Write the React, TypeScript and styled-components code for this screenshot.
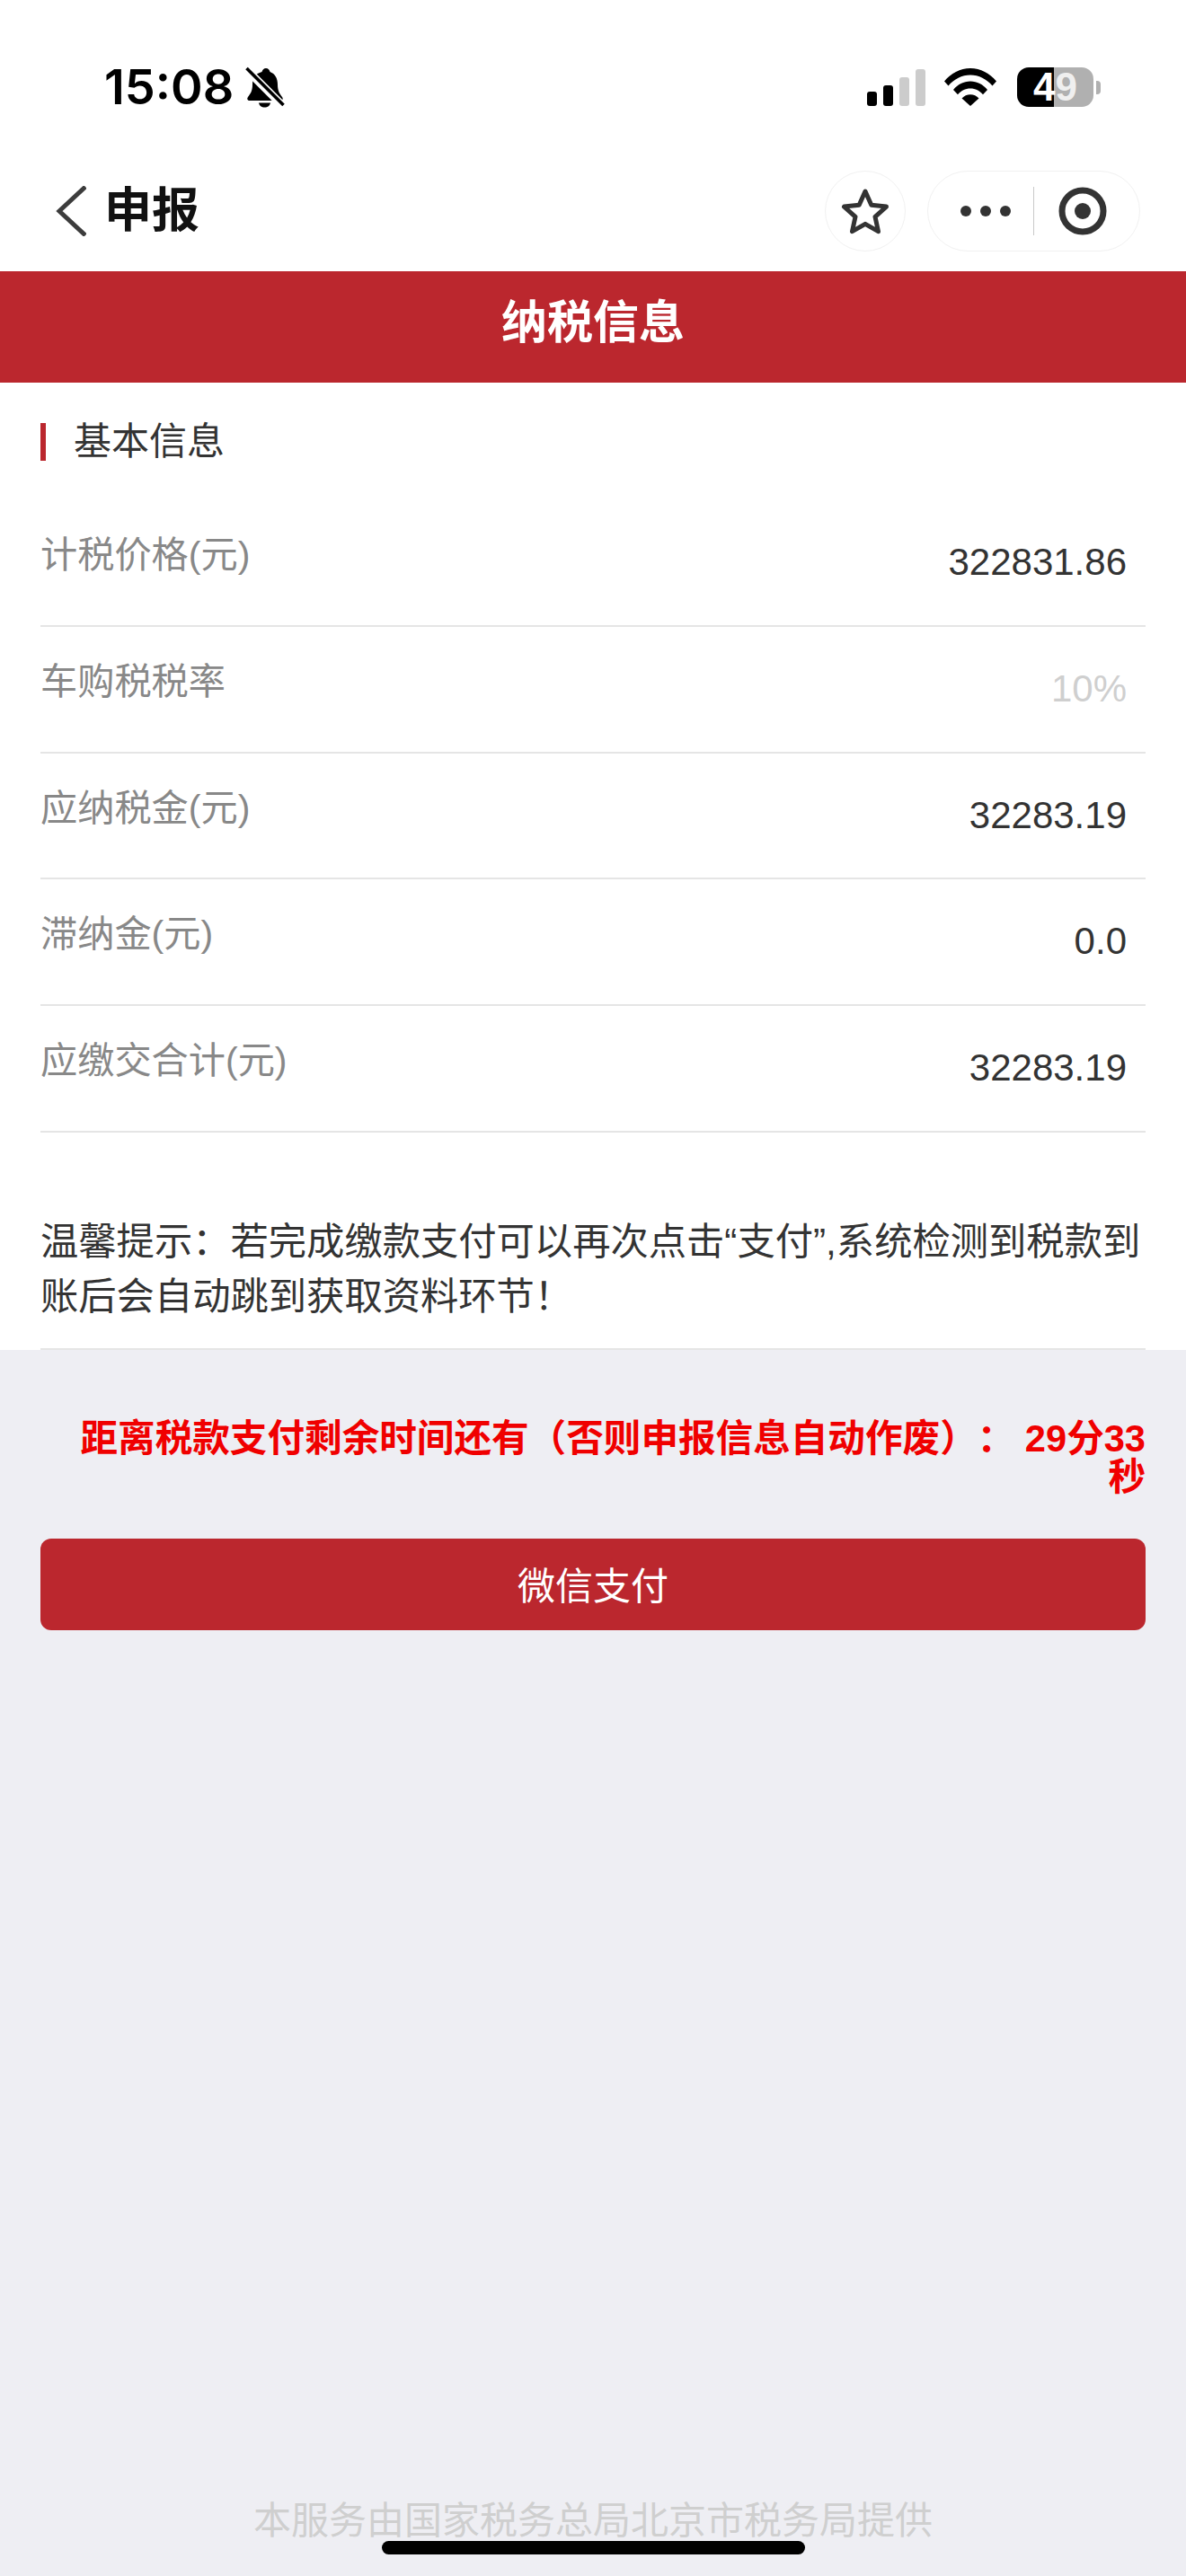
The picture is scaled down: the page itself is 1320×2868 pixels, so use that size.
import React from "react";
import styled, { createGlobalStyle } from "styled-components";

const SANS = `"Liberation Sans", "Noto Sans CJK SC", sans-serif`;
const RED = "#bb272e";

const Global = createGlobalStyle`
  html, body { margin: 0; padding: 0; background: #eeeef3; }
  * { box-sizing: border-box; text-spacing-trim: space-all; }
`;

const Page = styled.div`
  position: relative;
  width: 1320px;
  height: 2868px;
  overflow: hidden;
  display: flex;
  flex-direction: column;
  background: #eeeef3;
  font-family: ${SANS};
`;

const StatusBar = styled.div`
  height: 190px;
  flex: none;
  background: #fff;
  display: flex;
  align-items: flex-start;
  justify-content: space-between;
  padding: 74px 95px 0 116px;
`;

const StatusLeft = styled.div`
  display: flex;
  align-items: center;
  gap: 13px;
  height: 46px;
`;

const Clock = styled.span`
  font-family: Inter, sans-serif;
  font-size: 54px;
  font-weight: 600;
  line-height: 46px;
  color: #000;
`;

const StatusRight = styled.div`
  display: flex;
  align-items: center;
  height: 46px;
`;

const Signal = styled.div`
  display: flex;
  align-items: flex-end;
  gap: 7px;
  height: 41px;
  margin-right: 21px;
`;

const SignalBar = styled.i<{ $h: number; $on?: boolean }>`
  display: block;
  width: 11px;
  height: ${(p) => p.$h}px;
  border-radius: 3px;
  background: ${(p) => (p.$on ? "#000" : "#cccccc")};
`;

const Battery = styled.div`
  position: relative;
  width: 85px;
  height: 44px;
  margin-left: 23px;
  border-radius: 13px;
  background: linear-gradient(to right, #000 0 41px, #b0b0b0 41px 100%);
  display: flex;
  align-items: center;
  justify-content: center;
`;

const BatteryDigits = styled.span`
  font-family: "Liberation Sans", sans-serif;
  font-weight: 700;
  font-size: 44px;
  line-height: 44px;
  color: #fff;
`;

const BatteryNine = styled.span`
  color: #efefef;
`;

const BatteryTip = styled.i`
  display: block;
  width: 5px;
  height: 15px;
  margin-left: 3px;
  border-radius: 0 4px 4px 0;
  background: #b0b0b0;
`;

const NavBar = styled.div`
  height: 112px;
  flex: none;
  background: #fff;
  display: flex;
  align-items: flex-start;
  padding: 0 51px 0 62px;
`;

const NavBack = styled.div`
  display: flex;
  align-items: center;
  height: 90px;
  gap: 20px;
`;

const NavTitle = styled.span`
  font-size: 53px;
  font-weight: 700;
  line-height: 90px;
  color: #111;
`;

const NavActions = styled.div`
  margin-left: auto;
  display: flex;
  gap: 24px;
`;

const RoundButton = styled.div`
  width: 90px;
  height: 90px;
  border-radius: 50%;
  border: 1px solid #f1f1f1;
  display: flex;
  align-items: center;
  justify-content: center;
`;

const Capsule = styled.div`
  width: 237px;
  height: 90px;
  border-radius: 45px;
  border: 1px solid #f1f1f1;
  display: flex;
  align-items: center;
`;

const Dots = styled.div`
  width: 117px;
  padding-left: 36px;
  display: flex;
  gap: 10px;
`;

const Dot = styled.i`
  display: block;
  width: 12px;
  height: 12px;
  border-radius: 50%;
  background: #333;
`;

const CapsuleDivider = styled.i`
  display: block;
  width: 1px;
  height: 54px;
  background: #c9c9c9;
`;

const RecordWrap = styled.div`
  flex: 1;
  display: flex;
  justify-content: center;
  padding-right: 10px;
`;

const Banner = styled.header`
  height: 124px;
  flex: none;
  background: ${RED};
  color: #fff;
  font-size: 51px;
  font-weight: 700;
  line-height: 116px;
  text-align: center;
`;

const Sheet = styled.main`
  height: 1077px;
  flex: none;
  background: #fff;
  padding: 0 45px;
  display: flex;
  flex-direction: column;
`;

const SectionHead = styled.h2`
  height: 131px;
  flex: none;
  margin: 0;
  padding: 45px 0 0;
  display: flex;
  align-items: flex-start;
  gap: 31px;
  font-size: 42px;
  font-weight: 400;
  line-height: 42px;
  color: #333;
`;

const SectionMark = styled.i`
  display: block;
  width: 6px;
  height: 42px;
  background: ${RED};
`;

const Row = styled.div`
  height: 140.8px;
  flex: none;
  border-bottom: 2px solid #e5e5e5;
  display: flex;
  justify-content: space-between;
  align-items: flex-start;
  padding-right: 21px;
`;

const RowLabel = styled.span`
  padding-top: 39px;
  font-size: 41.2px;
  line-height: 44px;
  color: #888;
`;

const RowValue = styled.span<{ $muted?: boolean }>`
  padding-top: 47px;
  font-size: 42px;
  line-height: 44px;
  color: ${(p) => (p.$muted ? "#cfcfcf" : "#333")};
`;

const Notice = styled.p`
  margin: 0;
  flex: 1;
  padding-top: 91px;
  font-size: 42.3px;
  line-height: 61px;
  color: #333;
  border-bottom: 2px solid #e5e5e5;
`;

const PayArea = styled.section`
  padding: 77px 45px 0;
`;

const Timer = styled.div`
  padding-left: 40px;
  text-align: right;
  font-size: 41.6px;
  font-weight: 700;
  line-height: 43px;
  color: #f00000;
`;

const PayButton = styled.button`
  display: block;
  width: 100%;
  height: 102px;
  margin-top: 47px;
  padding: 0 0 4px;
  border: 0;
  border-radius: 12px;
  background: ${RED};
  color: #fff;
  font-family: ${SANS};
  font-size: 42px;
  font-weight: 400;
`;

const Footer = styled.footer`
  margin-top: auto;
  padding-bottom: 40px;
  text-align: center;
  font-size: 42px;
  line-height: 42px;
  color: #cfcfcf;
`;

const HomeBar = styled.i`
  position: absolute;
  left: 425px;
  bottom: 24px;
  width: 471px;
  height: 15px;
  border-radius: 8px;
  background: #000;
`;

const rows: { label: string; value: string; muted?: boolean }[] = [
  { label: "计税价格(元)", value: "322831.86" },
  { label: "车购税税率", value: "10%", muted: true },
  { label: "应纳税金(元)", value: "32283.19" },
  { label: "滞纳金(元)", value: "0.0" },
  { label: "应缴交合计(元)", value: "32283.19" },
];

const BellOff = () => (
  <svg width="44" height="46" viewBox="0 0 44 46">
    <path
      d="M23 2c2.500 0 4 2 4.500 4C33 8 36 13 36 20c0 7 2 10 5 14 1.500 2 .5 4-2 4H5c-2.500 0-3.500-2-2-4 3-4 5-7 5-14 0-7 3-12 10.500-14C19 4 20.500 2 23 2z"
      fill="#000"
    />
    <path d="M15 40.500h13c-.5 3-3 5-6.500 5S15.500 43.500 15 40.500z" fill="#000" />
    <path d="M1 3l41 41" stroke="#fff" strokeWidth="9" />
    <path d="M1.500 2l41 41" stroke="#000" strokeWidth="3.600" />
  </svg>
);

const Wifi = () => (
  <svg width="58" height="42" viewBox="0 0 58 42">
    <path d="M0 14.500C7.500 5.500 17.500 0 29 0s21.500 5.500 29 14.500l-4.500 5C47 12 38.500 7.500 29 7.500S11 12 4.500 19.500z" fill="#000" />
    <path d="M10 24C15 18 21.500 14.500 29 14.500S43 18 48 24l-5 5.200C39.500 25 34.500 22.500 29 22.500S18.500 25 15 29.200z" fill="#000" />
    <path d="M19.500 33.500C22 30.800 25.300 29.300 29 29.300s7 1.500 9.500 4.200L29 42z" fill="#000" />
  </svg>
);

const Star = () => (
  <svg width="54" height="52" viewBox="0 0 54 52">
    <path
      d="M27 4l6.800 15.300 16.700 1.800-12.500 11.200 3.500 16.400L27 40.300l-14.500 8.400L16 32.300 3.500 21.100l16.700-1.800z"
      fill="none"
      stroke="#333"
      strokeWidth="5"
      strokeLinejoin="round"
    />
  </svg>
);

const Chevron = () => (
  <svg width="34" height="56" viewBox="0 0 34 56">
    <path d="M33 1L4 28l29 27" fill="none" stroke="#3c3c3c" strokeWidth="5" />
  </svg>
);

const RecordIcon = () => (
  <svg width="54" height="54" viewBox="0 0 54 54">
    <circle cx="27" cy="27" r="23" fill="none" stroke="#333" strokeWidth="7" />
    <circle cx="27" cy="27" r="9" fill="#333" />
  </svg>
);

export default function App() {
  return (
    <Page>
      <Global />
      <StatusBar>
        <StatusLeft>
          <Clock>15:08</Clock>
          <BellOff />
        </StatusLeft>
        <StatusRight>
          <Signal>
            <SignalBar $h={16} $on />
            <SignalBar $h={23} $on />
            <SignalBar $h={32} />
            <SignalBar $h={41} />
          </Signal>
          <Wifi />
          <Battery>
            <BatteryDigits>
              4<BatteryNine>9</BatteryNine>
            </BatteryDigits>
          </Battery>
          <BatteryTip />
        </StatusRight>
      </StatusBar>
      <NavBar>
        <NavBack>
          <Chevron />
          <NavTitle>申报</NavTitle>
        </NavBack>
        <NavActions>
          <RoundButton>
            <Star />
          </RoundButton>
          <Capsule>
            <Dots>
              <Dot />
              <Dot />
              <Dot />
            </Dots>
            <CapsuleDivider />
            <RecordWrap>
              <RecordIcon />
            </RecordWrap>
          </Capsule>
        </NavActions>
      </NavBar>
      <Banner>纳税信息</Banner>
      <Sheet>
        <SectionHead>
          <SectionMark />
          基本信息
        </SectionHead>
        {rows.map((r) => (
          <Row key={r.label}>
            <RowLabel>{r.label}</RowLabel>
            <RowValue $muted={r.muted}>{r.value}</RowValue>
          </Row>
        ))}
        <Notice>温馨提示：若完成缴款支付可以再次点击“支付”,系统检测到税款到账后会自动跳到获取资料环节！</Notice>
      </Sheet>
      <PayArea>
        <Timer>距离税款支付剩余时间还有（否则申报信息自动作废）： 29分33秒</Timer>
        <PayButton>微信支付</PayButton>
      </PayArea>
      <Footer>本服务由国家税务总局北京市税务局提供</Footer>
      <HomeBar />
    </Page>
  );
}
